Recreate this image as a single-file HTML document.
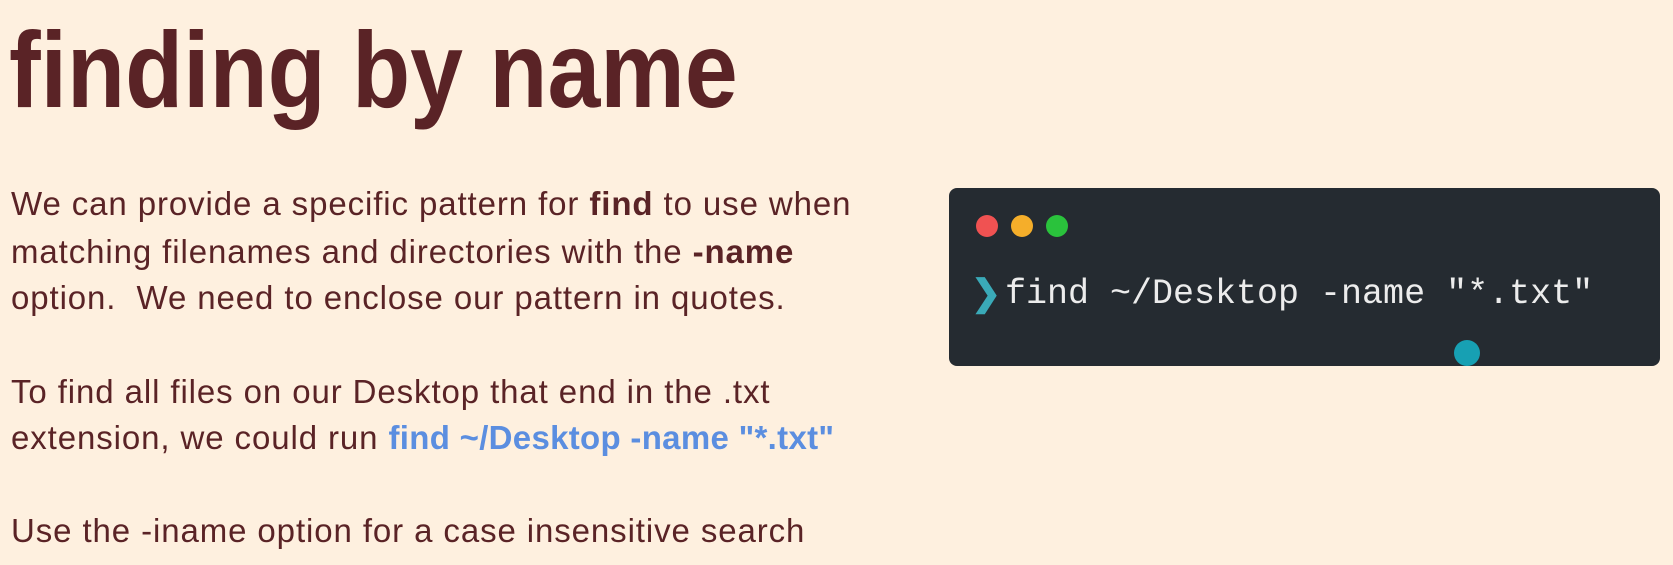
<!DOCTYPE html>
<html><head><meta charset="utf-8"><style>
html,body{margin:0;padding:0;}
body{width:1673px;height:565px;background:#fef0df;position:relative;overflow:hidden;font-family:"Liberation Sans",sans-serif;color:#5a2326;}
.t{position:absolute;left:9px;top:16px;font-size:108px;font-weight:bold;line-height:1;white-space:nowrap;transform-origin:0 0;transform:scaleX(0.88);}
.l{position:absolute;left:11px;font-size:33px;letter-spacing:0.9px;white-space:nowrap;line-height:1;}
b{font-weight:bold;}
.blue{color:#5b8ee0;font-weight:bold;letter-spacing:0.3px;}
.term{position:absolute;left:949px;top:188px;width:711px;height:178px;background:#252b31;border-radius:8px;}
.dot{position:absolute;top:27px;width:22px;height:22px;border-radius:50%;}
.cmd{position:absolute;left:56px;top:86px;font-family:"Liberation Mono",monospace;font-size:35px;color:#ececec;white-space:pre;}
.chev{position:absolute;left:22px;top:84px;font-size:36px;color:#3aaab8;font-weight:bold;}
.cur{position:absolute;left:505px;top:152px;width:26px;height:26px;border-radius:50%;background:#17a0b3;}
</style></head><body>
<div class="t">finding by name</div>
<div class="l" style="top:187px">We can provide a specific pattern for <b>find</b> to use when</div>
<div class="l" style="top:235px">matching filenames and directories with the <b>-name</b></div>
<div class="l" style="top:281px">option.&nbsp; We need to enclose our pattern in quotes.</div>
<div class="l" style="top:375px">To find all files on our Desktop that end in the .txt</div>
<div class="l" style="top:421px">extension, we could run <span class="blue">find ~/Desktop -name "*.txt"</span></div>
<div class="l" style="top:514px">Use the -iname option for a case insensitive search</div>
<div class="term">
<div class="dot" style="left:27px;background:#f05252"></div>
<div class="dot" style="left:62px;background:#f5ae2a"></div>
<div class="dot" style="left:97px;background:#2ac23c"></div>
<div class="chev">❯</div>
<div class="cmd">find ~/Desktop -name "*.txt"</div>
<div class="cur"></div>
</div>
</body></html>
